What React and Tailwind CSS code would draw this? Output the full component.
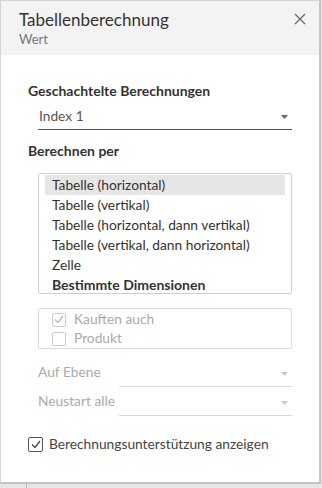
import React from "react";

const listItems = [
  "Tabelle (horizontal)",
  "Tabelle (vertikal)",
  "Tabelle (horizontal, dann vertikal)",
  "Tabelle (vertikal, dann horizontal)",
  "Zelle",
];

function Arrow({ dim }) {
  return (
    <svg width="7" height="4" viewBox="0 0 7 4" className="shrink-0">
      <path d="M0 0h7L3.5 4z" fill={dim ? "#c8c8c8" : "#666"} />
    </svg>
  );
}

function Check({ color }) {
  return (
    <svg width="10" height="9" viewBox="0 0 10 9">
      <path d="M1 4.5l3 3L9 1" fill="none" stroke={color} strokeWidth="1.3" />
    </svg>
  );
}

export default function App() {
  return (
    <div className="bg-[#e6e6e6] h-[488px] w-[322px] font-['Lato',sans-serif] text-[#333]">
      <div className="w-[321px] h-[484px] bg-white border border-[#d4d4d4] border-r-[2px] border-r-[#c4c4c4] border-b-[2px] border-b-[#c4c4c4] flex flex-col">
        <div className="h-[54px] bg-[#f3f3f3] flex justify-between pl-[18px] pr-[13px] pt-[7px]">
          <div>
            <div className="text-[17px] leading-[24px] text-[#333]">Tabellenberechnung</div>
            <div className="text-[13px] leading-[14px] text-[#777]">Wert</div>
          </div>
          <svg width="12" height="12" viewBox="0 0 12 12" className="mt-[5px]">
            <path d="M1 1l10 10M11 1L1 11" stroke="#666" strokeWidth="1.3" />
          </svg>
        </div>

        <div className="pl-[27px] pr-[27px] pt-[27px] text-[13.75px]">
          <div className="text-[14px] font-bold leading-[18px]">Geschachtelte Berechnungen</div>
          <div className="ml-[10px] mt-[4px] h-[26px] border-b border-[#555] flex items-center justify-between pl-[1px] pr-[4px]">
            <span className="text-[#555]">Index 1</span>
            <Arrow />
          </div>
          <div className="text-[14px] font-bold leading-[18px] mt-[12px]">Berechnen per</div>

          <div className="ml-[10px] mt-[13px] h-[121px] border border-[#cfcfcf] rounded-[2px] pl-[6px] pr-[6px] pt-[1px]">
            {listItems.map((item, i) => (
              <div
                key={item}
                className={`h-[20px] flex items-center pl-[7px] ${i === 0 ? "bg-[#e6e6e6]" : ""}`}
              >
                {item}
              </div>
            ))}
            <div className="h-[19px] flex items-center pl-[7px] text-[14px] font-bold">Bestimmte Dimensionen</div>
          </div>

          <div className="ml-[10px] mt-[14px] h-[41px] border border-[#dcdcdc] rounded-[2px] pl-[13px] pt-[1px] text-[#aaa]">
            <div className="h-[19px] flex items-center gap-[8px]">
              <span className="w-[14px] h-[14px] border border-[#ccc] rounded-[2px] flex items-center justify-center">
                <Check color="#bbb" />
              </span>
              Kauften auch
            </div>
            <div className="h-[19px] flex items-center gap-[8px]">
              <span className="w-[14px] h-[14px] border border-[#ccc] rounded-[2px]" />
              Produkt
            </div>
          </div>

          <div className="ml-[10px] mt-[12px] flex items-end text-[#aaa]">
            <span className="w-[81px] pb-[4px]">Auf Ebene</span>
            <div className="flex-1 h-[26px] border-b border-[#d8d8d8] flex items-center justify-end pr-[4px]">
              <Arrow dim />
            </div>
          </div>
          <div className="ml-[10px] mt-[3px] flex items-end text-[#aaa]">
            <span className="w-[81px] pb-[4px]">Neustart alle</span>
            <div className="flex-1 h-[26px] border-b border-[#d8d8d8] flex items-center justify-end pr-[4px]">
              <Arrow dim />
            </div>
          </div>

          <div className="mt-[18px] flex items-center gap-[6px] text-[#444]">
            <span className="w-[15px] h-[15px] border border-[#555] rounded-[2px] flex items-center justify-center">
              <Check color="#444" />
            </span>
            Berechnungsunterstützung anzeigen
          </div>
        </div>
      </div>
      <div className="ml-[26px] w-px h-[4px] bg-[#bbb]" />
    </div>
  );
}
